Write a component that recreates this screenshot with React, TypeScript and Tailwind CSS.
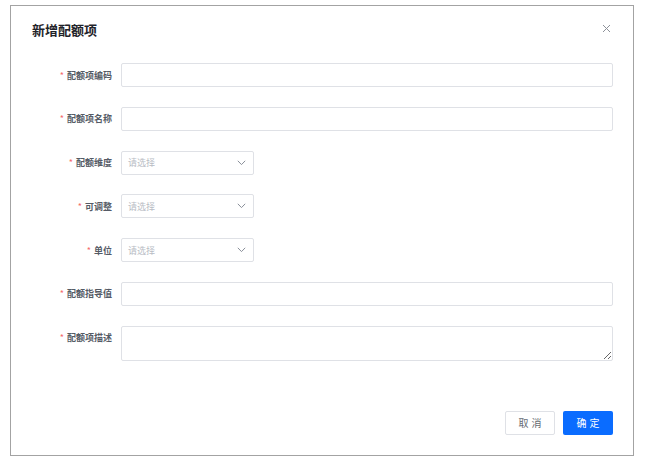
import React from "react";

const font = { fontFamily: '"Noto Sans CJK SC", "Noto Sans", sans-serif' };

function Label({ text }: { text: string }) {
  return (
    <div className="w-[101px] h-[24px] flex items-center justify-end shrink-0">
      <span className="text-[#f56c6c] text-[9px] mr-[3px] leading-none">*</span>
      <span className="text-[9px] font-semibold text-[#555b66] leading-none">{text}</span>
    </div>
  );
}

function Chevron() {
  return (
    <svg width="9" height="6" viewBox="0 0 9 6" fill="none">
      <path d="M0.8 0.8 L4.5 4.6 L8.2 0.8" stroke="#8a8f99" strokeWidth="1" />
    </svg>
  );
}

function InputRow({ label }: { label: string }) {
  return (
    <div className="flex items-start">
      <Label text={label} />
      <div className="ml-[9px] mr-[20px] flex-1 h-[24px] border border-[#dfe1e6] rounded-[2px] bg-white" />
    </div>
  );
}

function SelectRow({ label }: { label: string }) {
  return (
    <div className="flex items-start">
      <Label text={label} />
      <div className="ml-[9px] w-[133px] h-[24px] border border-[#dfe1e6] rounded-[2px] bg-white flex items-center justify-between pl-[6px] pr-[7px]">
        <span className="text-[9px] text-[#b8bcc4] leading-none">请选择</span>
        <Chevron />
      </div>
    </div>
  );
}

export default function App() {
  return (
    <div className="w-[653px] h-[463px] bg-white pt-[5px] pl-[10px]" style={font}>
      <div className="relative w-[624px] h-[451px] border border-[#a3a3a3] bg-white flex flex-col">
        <div className="flex items-center justify-between pt-[15px] pl-[21px] pr-[22px]">
          <span className="text-[13px] font-bold text-[#1f2329] leading-[18px]">新增配额项</span>
          <svg width="9" height="9" viewBox="0 0 9 9" className="mt-[-4px]">
            <path d="M1 1 L8 8 M8 1 L1 8" stroke="#8d9199" strokeWidth="1" />
          </svg>
        </div>
        <div className="flex flex-col gap-[19.8px] mt-[24px]">
          <InputRow label="配额项编码" />
          <InputRow label="配额项名称" />
          <SelectRow label="配额维度" />
          <SelectRow label="可调整" />
          <SelectRow label="单位" />
          <InputRow label="配额指导值" />
          <div className="flex items-start">
            <Label text="配额项描述" />
            <textarea className="ml-[9px] mr-[20px] flex-1 h-[35px] border border-[#dfe1e6] rounded-[2px] bg-white resize-y outline-none" />
          </div>
        </div>
        <div className="flex justify-end gap-[8px] pr-[20px] mt-[50px]">
          <button className="w-[50px] h-[24px] border border-[#dfe1e6] rounded-[2px] bg-white text-[10px] text-[#666b73] tracking-[3px] pl-[3px]">取消</button>
          <button className="w-[50px] h-[24px] rounded-[2px] bg-[#0a6cff] text-[10px] text-white tracking-[3px] pl-[3px]">确定</button>
        </div>
      </div>
    </div>
  );
}
